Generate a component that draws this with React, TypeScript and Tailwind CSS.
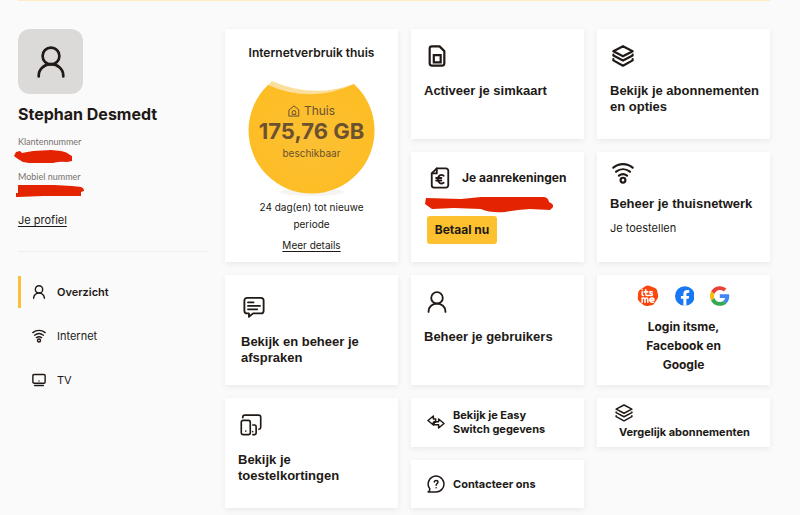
import type { ReactNode } from "react";

type IconProps = { className?: string; stroke?: number };

function Svg({ className, stroke = 2.4, children }: IconProps & { children: ReactNode }) {
  return (
    <svg
      viewBox="0 0 24 24"
      fill="none"
      stroke="currentColor"
      strokeWidth={stroke}
      strokeLinecap="round"
      strokeLinejoin="round"
      aria-hidden="true"
      className={className}
    >
      {children}
    </svg>
  );
}

const PersonIcon = (p: IconProps) => (
  <Svg {...p}>
    <circle cx="12" cy="7.500" r="6.300" />
    <path d="M2.800 22.800v-.6a9.200 8.600 0 0 1 18.400 0v.6" />
  </Svg>
);

const WifiIcon = (p: IconProps) => (
  <Svg {...p}>
    <path d="M1.500 6.200c6-5.200 15-5.200 21 0M4.500 10.600c4.500-3.600 10.500-3.600 15 0M7.600 14.800c2.700-2 6.100-2 8.800 0" />
    <circle cx="12" cy="19.800" r="2.600" />
  </Svg>
);

const TvIcon = (p: IconProps) => (
  <Svg {...p}>
    <rect x="1.500" y="2.500" width="21" height="15" rx="2" />
    <path d="M4.500 21.500h15M12 13.500v.1" />
  </Svg>
);

const SimIcon = (p: IconProps) => (
  <Svg {...p}>
    <path d="M6.500 1.500h8.300l5.200 5.200v13.300a2.500 2.500 0 0 1-2.500 2.500h-11a2.500 2.500 0 0 1-2.500-2.500V4a2.500 2.500 0 0 1 2.500-2.500z" />
    <path strokeLinejoin="miter" d="M8.500 11h7.500v8h-7.500z" />
  </Svg>
);

const LayersIcon = (p: IconProps) => (
  <Svg {...p}>
    <path d="M12 1.300 22.500 6.800 12 12.300 1.500 6.800z" />
    <path d="M1.500 10.500v1L12 17l10.500-5.500v-1M1.500 15.500v1.300L12 22.600l10.500-5.800v-1.300" />
  </Svg>
);

const ChatIcon = (p: IconProps) => (
  <Svg {...p}>
    <path d="M4.500 2h15a3 3 0 0 1 3 3v11a3 3 0 0 1-3 3h-8.500L6.500 22.700V19h-2a3 3 0 0 1-3-3V5a3 3 0 0 1 3-3z" />
    <path d="M5.500 7h6M5.500 10.800h13M5.500 14.500h10" />
  </Svg>
);

const DevicesIcon = (p: IconProps) => (
  <Svg {...p}>
    <path d="M3 4V3.500A2.300 2.300 0 0 1 5.300 1.200h15A2.300 2.300 0 0 1 22.600 3.500v10.800a2.300 2.300 0 0 1-2 2.300" />
    <rect x="1.400" y="7" width="9.800" height="15.500" rx="2" />
    <path d="M14 12h1.800a1.800 1.800 0 0 1 1.800 1.800v6.900a1.800 1.800 0 0 1-1.800 1.800H14M6.300 18.500v.1M13.800 19.300v.1" />
  </Svg>
);

const InvoiceIcon = (p: IconProps) => (
  <Svg {...p}>
    <path d="M8.500 1.500h10A2.500 2.500 0 0 1 21 4v16a2.500 2.500 0 0 1-2.500 2.500h-13A2.500 2.500 0 0 1 3 20V7z" />
    <path d="M8.500 1.500V7H3" />
    <path d="M16 9.500c-3.200-2-6.200-.2-6.200 3.800s3 5.800 6.200 3.800M7.800 12h5.700M7.800 14.700h5.700" />
  </Svg>
);

const SwitchIcon = (p: IconProps) => (
  <Svg {...p}>
    <path d="M8.500 4 1.300 10l7.200 6v-3.800h3V8h-3z" />
    <path d="M15.500 8v3.500h-6v4.300h6V20l7.200-6z" />
  </Svg>
);

const HelpIcon = (p: IconProps) => (
  <Svg {...p}>
    <path d="M1.500 22.500H12A10.500 10.500 0 1 0 3.800 18.500C3.800 20.500 3 21.800 1.500 22.500z" />
    <path d="M9.700 9.300c.4-2.800 5-2.600 5 .1 0 1.900-2.500 2-2.500 4.200M12.200 16.900v.1" />
  </Svg>
);

const HouseIcon = (p: IconProps) => (
  <Svg {...p}>
    <path d="M2.500 9.500 12 1.800l9.500 7.700v12.700h-19z" />
    <path d="M8.500 18v-3.500a3.500 3.500 0 0 1 7 0V18z" />
  </Svg>
);

function ItsmeLogo() {
  return (
    <svg viewBox="0 0 42 42" role="img" aria-label="itsme" className="size-[22px]">
      <path
        d="M17 1.500q4-2 8 0l10 4q3 1.500 4 5l2 10q.5 3-1.500 6l-6 9q-2 3-5 3.500l-9 1.500q-4 .5-7-2l-8-7q-3-2.500-3-6l.5-9q0-4 3-7z"
        fill="#f9470d"
      />
      <g fill="none" stroke="#fff" strokeWidth="3" strokeLinecap="round" strokeLinejoin="round">
        <path d="M10 13v5q0 2 2.500 2M10 8.500v.1M17 9v8q0 3 3 3h2M14 13h7M30 13q-5-1.500-5 1 0 1.500 2.500 2t2.500 2q0 3-6 1.500" />
        <path d="M10 33v-8M10 27q4-4 5.500 0v6M15.500 27q4-4 5.500 0v6M25 29h8q0-4-4-4t-4 4q0 4 4.500 4h2.500" />
      </g>
    </svg>
  );
}

function FacebookLogo() {
  return (
    <svg viewBox="0 0 24 24" role="img" aria-label="Facebook" className="size-5">
      <circle cx="12" cy="12" r="12" fill="#1877f2" />
      <path
        fill="#fff"
        d="M16.700 15.500l.5-3.500h-3.300V9.800c0-1 .5-1.900 2-1.900h1.500V5s-1.400-.2-2.700-.2c-2.700 0-4.500 1.600-4.500 4.600V12h-3v3.500h3v8.400a12 12 0 0 0 3.700 0v-8.400z"
      />
    </svg>
  );
}

function GoogleLogo() {
  return (
    <svg viewBox="0 0 48 48" role="img" aria-label="Google" className="size-5">
      <path fill="#EA4335" d="M24 9.500c3.540 0 6.710 1.220 9.210 3.600l6.850-6.850C35.900 2.380 30.470 0 24 0 14.620 0 6.510 5.380 2.560 13.220l7.980 6.190C12.430 13.720 17.740 9.500 24 9.500z" />
      <path fill="#4285F4" d="M46.980 24.550c0-1.570-.15-3.090-.38-4.550H24v9.020h12.940c-.58 2.960-2.260 5.480-4.780 7.180l7.730 6c4.510-4.180 7.090-10.360 7.090-17.650z" />
      <path fill="#FBBC05" d="M10.530 28.590c-.48-1.450-.76-2.990-.76-4.590s.27-3.140.76-4.590l-7.980-6.190C.92 16.460 0 20.120 0 24c0 3.880.92 7.540 2.560 10.780l7.970-6.190z" />
      <path fill="#34A853" d="M24 48c6.480 0 11.930-2.130 15.890-5.810l-7.730-6c-2.150 1.450-4.920 2.300-8.160 2.300-6.260 0-11.570-4.220-13.470-9.910l-7.980 6.190C6.510 42.620 14.620 48 24 48z" />
    </svg>
  );
}

const cardShell = "bg-white shadow-[0_2px_6px_rgba(0,0,0,0.07)]";

function Card({ className, children }: { className: string; children: ReactNode }) {
  return (
    <a href="#" className={`${cardShell} ${className}`}>
      {children}
    </a>
  );
}

function CardTitle({ children }: { children: ReactNode }) {
  return (
    <h2 className="mt-4 font-['Liberation_Sans',Arial,sans-serif] text-[13px] leading-4">{children}</h2>
  );
}

function Sidebar() {
  return (
    <aside className="w-[190px] shrink-0">
      <div className="flex size-[65px] items-center justify-center rounded-xl bg-[#dcdad8]">
        <PersonIcon className="size-8" stroke={2} />
      </div>
      <h1 className="mt-2.5 text-base leading-5 font-bold whitespace-nowrap">Stephan Desmedt</h1>
      <dl className="mt-[11px] font-['Lato',sans-serif] text-[9px] leading-[14px] text-[#77736f]">
        <dt>Klantennummer</dt>
        <dd className="-ml-1">
          <svg viewBox="0 0 70 14" aria-hidden="true" className="h-3.5 w-[70px]">
            <path fill="#e42300" d="M0 7 2 3l4-1 2 2 11-2 18-1 10 1q6 1 9 4l2 1v5l-5 1q-7-1-14 1l-18 1-12-2-5-3z" />
          </svg>
        </dd>
        <dt className="mt-[7px]">Mobiel nummer</dt>
        <dd className="-ml-1">
          <svg viewBox="0 0 70 14" aria-hidden="true" className="h-3.5 w-[70px]">
            <path fill="#e42300" d="M4 1 40 1l18 1 9 1q3 1 3 4l-3 1v4l-38 0-25 1H2V9h2z" />
          </svg>
        </dd>
      </dl>
      <a href="#" className="mt-3.5 inline-block text-[11px] leading-4 underline underline-offset-2">
        Je profiel
      </a>
      <nav className="mt-[21px] flex flex-col gap-3 border-t border-[#efefef] pt-6 text-[11px]">
        <a href="#" className="flex h-8 items-center border-l-[3px] border-[#fac03d] pl-[11px] font-semibold">
          <PersonIcon className="mr-[11px] size-3.5" />
          Overzicht
        </a>
        <a href="#" className="flex h-8 items-center pl-3.5">
          <WifiIcon className="mr-[11px] size-3.5" />
          Internet
        </a>
        <a href="#" className="flex h-8 items-center pl-3.5">
          <TvIcon className="mr-[11px] size-3.5" />
          TV
        </a>
      </nav>
    </aside>
  );
}

function UsageCard() {
  return (
    <section className={`${cardShell} row-span-2 flex flex-col items-center pt-4 text-center text-[10px] font-normal`}>
      <h2 className="text-xs leading-4 font-semibold">Internetverbruik thuis</h2>
      <div className="mt-4 grid">
        <svg viewBox="0 0 128 120" aria-hidden="true" className="col-start-1 row-start-1 h-[120px] w-32">
          <defs>
            <radialGradient id="usage">
              <stop offset="0" stopColor="#fbc034" />
              <stop offset="1" stopColor="#fdbd25" />
            </radialGradient>
          </defs>
          <ellipse cx="64" cy="115" rx="32" ry="4" fill="#f6f4f1" />
          <path fill="#fbdf9c" d="M24 4Q64 22 106 7L99 14 61 20 19 9z" />
          <path fill="url(#usage)" d="M20 8Q64 27 106 7A63 63 0 1 1 20 8z" />
        </svg>
        <div className="col-start-1 row-start-1 flex flex-col items-center pt-[26px] text-[#6b5130]">
          <span className="flex items-center gap-1 text-xs leading-4">
            <HouseIcon className="size-3" stroke={2} />
            Thuis
          </span>
          <strong className="text-[22px] leading-6 font-bold">175,76 GB</strong>
          <span className="mt-0.5 leading-4">beschikbaar</span>
        </div>
      </div>
      <p className="mt-0.5 w-32 leading-[17px]">24 dag(en) tot nieuwe periode</p>
      <a href="#" className="mt-1 leading-4 underline underline-offset-2">
        Meer details
      </a>
    </section>
  );
}

export default function App() {
  return (
    <div className="min-h-screen bg-[#fafafa] pr-[30px] pl-[18px] font-['Inter','Liberation_Sans',sans-serif] text-[#211915]">
      <div className="h-px bg-[#feecc2]" />
      <div className="flex gap-[17px] pt-7">
        <Sidebar />
        <main className="grid flex-1 auto-rows-[110px] grid-cols-3 gap-[13px] font-bold">
          <UsageCard />
          <Card className="pt-4 pr-1 pl-[13px]">
            <SimIcon className="ml-0.5 size-[22px]" />
            <CardTitle>Activeer je simkaart</CardTitle>
          </Card>
          <Card className="pt-4 pr-1 pl-[13px]">
            <LayersIcon className="ml-0.5 size-[22px]" />
            <CardTitle>Bekijk je abonnementen en opties</CardTitle>
          </Card>
          <section className={`${cardShell} px-4 pt-[15px]`}>
            <div className="flex gap-[11px]">
              <InvoiceIcon className="ml-0.5 size-[22px]" stroke={2} />
              <h2 className="pt-[3px] text-xs leading-4 whitespace-nowrap">Je aanrekeningen</h2>
            </div>
            <svg viewBox="0 0 128 16" aria-hidden="true" className="mt-2 -ml-0.5 h-4 w-32">
              <path fill="#e42300" d="M1 1 36 2 56 0h62q5 0 6 5 5 2 4 5l-3 3-20-1q-15 1-25 3-15 1-24-3L29 11l-22 1-7-5z" />
            </svg>
            <button type="button" className="mt-[3px] h-7 w-[70px] rounded-[3px] bg-[#fdc02f] text-xs font-bold">
              Betaal nu
            </button>
          </section>
          <section className={`${cardShell} pt-2.5 pr-1 pl-[13px]`}>
            <WifiIcon className="ml-0.5 size-[22px]" />
            <div className="-mt-1">
              <CardTitle>Beheer je thuisnetwerk</CardTitle>
            </div>
            <a href="#" className="mt-2 block text-[11px] leading-4 font-normal">
              Je toestellen
            </a>
          </section>
          <Card className="px-4 pt-[21px]">
            <ChatIcon className="ml-0.5 size-[22px]" stroke={2} />
            <CardTitle>Bekijk en beheer je afspraken</CardTitle>
          </Card>
          <Card className="pt-4 pr-1 pl-[13px]">
            <PersonIcon className="ml-0.5 size-[22px]" stroke={2} />
            <CardTitle>Beheer je gebruikers</CardTitle>
          </Card>
          <Card className="px-10 pt-2.5 text-center">
            <span className="flex items-center justify-center gap-4">
              <ItsmeLogo />
              <FacebookLogo />
              <GoogleLogo />
            </span>
            <h2 className="mt-2.5 text-xs leading-[19px]">Login itsme, Facebook en Google</h2>
          </Card>
          <Card className="px-[13px] pt-4">
            <DevicesIcon className="ml-0.5 size-[22px]" stroke={1.8} />
            <CardTitle>Bekijk je toestelkortingen</CardTitle>
          </Card>
          <div className="grid grid-rows-2 gap-[13px] text-[11px] leading-[14px]">
            <Card className="flex items-center gap-2 px-4">
              <SwitchIcon className="size-[18px] shrink-0" stroke={2} />
              <h2 className="w-[100px]">Bekijk je Easy Switch gegevens</h2>
            </Card>
            <Card className="flex items-center gap-2 px-4">
              <HelpIcon className="size-[18px] shrink-0" stroke={2} />
              <h2>Contacteer ons</h2>
            </Card>
          </div>
          <div className="grid grid-rows-2 gap-[13px] text-[11px] leading-[14px]">
            <Card className="px-4 pt-1.5">
              <LayersIcon className="ml-0.5 size-[18px]" stroke={2} />
              <h2 className="mt-[3px] ml-1.5 whitespace-nowrap">Vergelijk abonnementen</h2>
            </Card>
          </div>
        </main>
      </div>
    </div>
  );
}
